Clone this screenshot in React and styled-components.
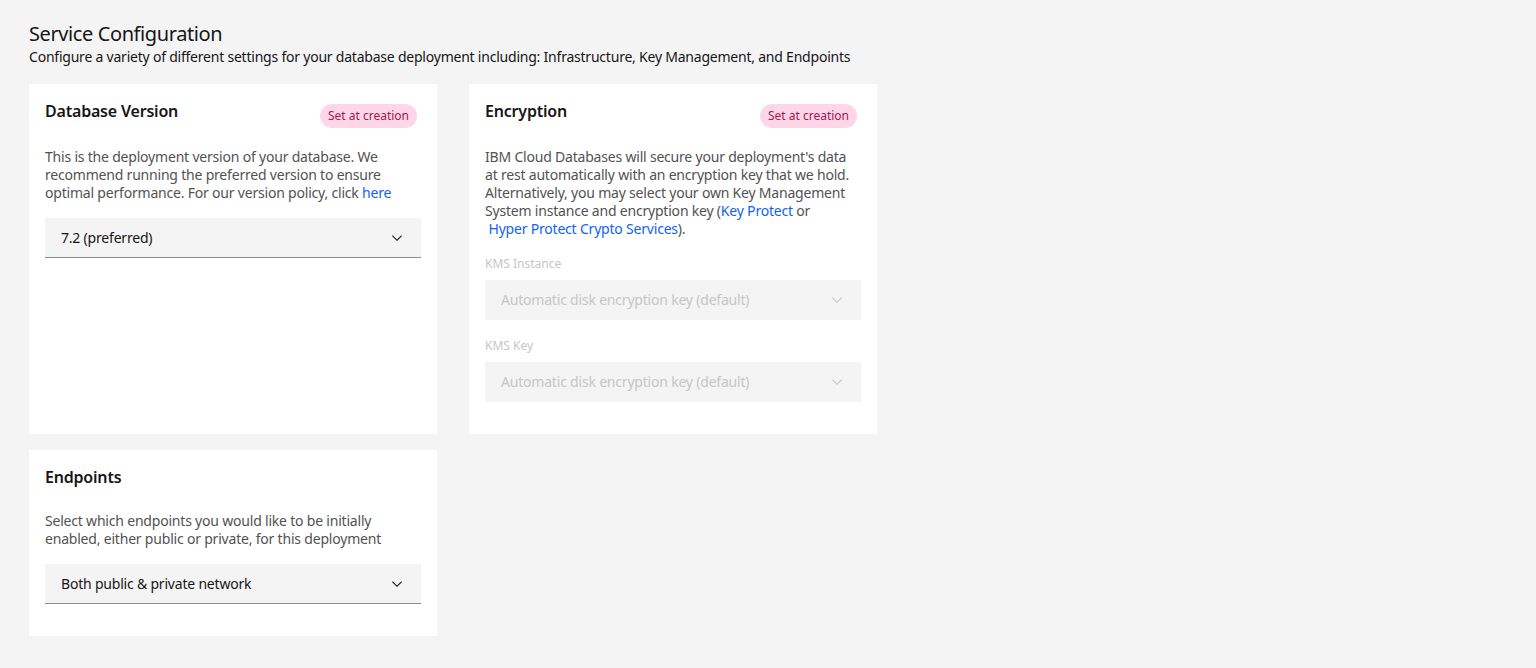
import styled, {createGlobalStyle} from "styled-components";

const GlobalStyle = createGlobalStyle`
    body {
        margin: 0;
        background: #f4f4f4;
        font-family: "Noto Sans", "Open Sans", sans-serif;
        color: #161616;
    }
`

function Chevron({disabled}) {
    return (
        <ChevronIcon viewBox = "0 0 16 16" $disabled = {disabled}>
            <path d = "M8 11L3 6l.7-.7L8 9.6l4.3-4.3.7.7z"/>
        </ChevronIcon>
    )
}

function Select({value, disabled}) {
    return (
        <SelectBox $disabled = {disabled}>
            <span>{value}</span>
            <Chevron disabled = {disabled}/>
        </SelectBox>
    )
}

function Card({title, tag, children}) {
    return (
        <Tile>
            <Header>
                <CardTitle>{title}</CardTitle>
                {tag && <Tag>Set at creation</Tag>}
            </Header>
            {children}
        </Tile>
    )
}

export default function App() {
    return (
        <Page>
            <GlobalStyle/>
            <Title>Service Configuration</Title>
            <Subtitle>
                Configure a variety of different settings for your database deployment including: Infrastructure, Key Management, and Endpoints
            </Subtitle>
            <Grid>
                <Card title = "Database Version" tag>
                    <Description>
                        This is the deployment version of your database. We<br/>
                        recommend running the preferred version to ensure<br/>
                        optimal performance. For our version policy, click <Link>here</Link>
                    </Description>
                    <Select value = "7.2 (preferred)"/>
                </Card>
                <Card title = "Encryption" tag>
                    <Description>
                        IBM Cloud Databases will secure your deployment's data<br/>
                        at rest automatically with an encryption key that we hold.<br/>
                        Alternatively, you may select your own Key Management<br/>
                        System instance and encryption key (<Link>Key Protect</Link> or<br/>
                        {"\u00a0"}<Link>Hyper Protect Crypto Services</Link>).
                    </Description>
                    <Field>
                        <Label>KMS Instance</Label>
                        <Select value = "Automatic disk encryption key (default)" disabled/>
                    </Field>
                    <Field>
                        <Label>KMS Key</Label>
                        <Select value = "Automatic disk encryption key (default)" disabled/>
                    </Field>
                </Card>
                <Card title = "Endpoints">
                    <Description>
                        Select which endpoints you would like to be initially<br/>
                        enabled, either public or private, for this deployment
                    </Description>
                    <Select value = "Both public & private network"/>
                </Card>
            </Grid>
        </Page>
    )
}

const Page = styled.div`
    padding: 20px 29px 32px;
`

const Title = styled.h1`
    margin: 0;
    font-size: 20px;
    font-weight: 400;
    line-height: 28px;
    letter-spacing: -0.4px;
    color: #161616;
`

const Subtitle = styled.p`
    margin: 0;
    font-size: 14px;
    line-height: 18px;
    letter-spacing: -0.22px;
    color: #161616;
`

const Grid = styled.div`
    margin-top: 18px;
    display: grid;
    grid-template-columns: repeat(2, 408px);
    gap: 16px 32px;
`

const Tile = styled.section`
    background: #ffffff;
    padding: 16px 16px 32px;
`

const Header = styled.div`
    display: flex;
    justify-content: space-between;
    align-items: flex-start;
`

const CardTitle = styled.h2`
    margin: 0;
    font-size: 16px;
    font-weight: 600;
    line-height: 22px;
    letter-spacing: -0.2px;
    color: #161616;
`

const Tag = styled.span`
    margin: 4px 4px -4px 0;
    height: 24px;
    padding: 0 8px;
    border-radius: 12px;
    background: #ffd6e8;
    color: #9f1853;
    font-size: 12px;
    line-height: 24px;
`

const Description = styled.p`
    margin: 24px 0 16px;
    font-size: 14px;
    line-height: 18px;
    letter-spacing: -0.2px;
    color: #525252;
`

const Link = styled.a`
    color: #0f62fe;
    text-decoration: none;
    cursor: pointer;
`

const Field = styled.div`
    margin-top: 18px;
    &:first-of-type {
        margin-top: 0;
    }
`

const Label = styled.div`
    font-size: 12px;
    line-height: 16px;
    color: #c6c6c6;
    margin-bottom: 8px;
`

const SelectBox = styled.div`
    height: 40px;
    box-sizing: border-box;
    display: flex;
    align-items: center;
    justify-content: space-between;
    padding: 0 16px;
    background: #f4f4f4;
    border-bottom: 1px solid ${p => p.$disabled ? "transparent" : "#8d8d8d"};
    font-size: 14px;
    letter-spacing: -0.2px;
    color: ${p => p.$disabled ? "#c6c6c6" : "#161616"};
`

const ChevronIcon = styled.svg`
    width: 16px;
    height: 16px;
    flex-shrink: 0;
    fill: ${p => p.$disabled ? "#c6c6c6" : "#161616"};
`
